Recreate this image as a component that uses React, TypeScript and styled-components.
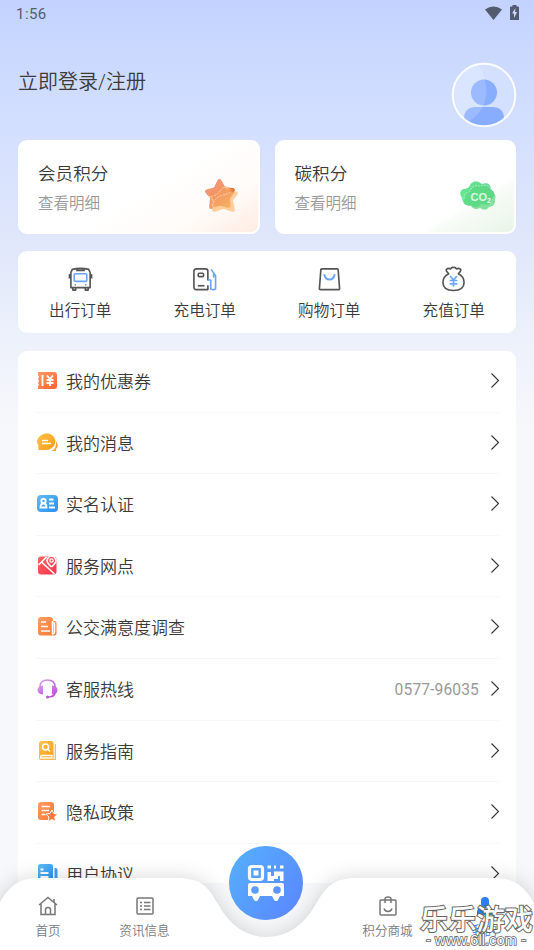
import React from "react";
import styled, { createGlobalStyle } from "styled-components";

const Global = createGlobalStyle`
  *, *::before, *::after { box-sizing: border-box; }
  body { margin: 0; overflow: hidden; font-family: Roboto, "Noto Sans CJK SC", sans-serif; font-weight: 350; color: #3a3a3a; }
  svg { display: block; overflow: visible; }
`;

const Screen = styled.main`
  position: relative;
  width: 534px;
  height: 950px;
  overflow: hidden;
  background: linear-gradient(180deg, #c3d3ff 0, #d1deff 110px, #e0e7fb 240px, #edf1fb 340px, #f7f8fb 430px, #f7f8fa 100%);
`;

const StatusBar = styled.header`
  height: 28px;
  padding: 0 15px 0 16px;
  display: flex;
  align-items: center;
  justify-content: space-between;
  color: #525c70;
  font-size: 15px;
  font-weight: 400;
  letter-spacing: 0.45px;
`;

const StatusIcons = styled.div`
  display: flex;
  align-items: center;
  gap: 8px;
  margin-top: -3px;
`;

const Profile = styled.section`
  height: 112px;
  padding: 33.5px 17px 0 18px;
  display: flex;
  justify-content: space-between;
`;

const Login = styled.h1`
  margin: 3.5px 0 0;
  font-size: 20px;
  line-height: 34px;
  font-weight: 350;
`;

const Points = styled.section`
  display: grid;
  grid-template-columns: 1fr 1fr;
  gap: 15px;
  padding: 0 18px;
`;

const PointCard = styled.article<{ $tint: string }>`
  height: 94px;
  display: flex;
  justify-content: space-between;
  border: 2px solid #fff;
  border-radius: 9px;
  padding: 18px 18px 0;
  background: ${(p) => p.$tint};
`;

const PointTitle = styled.div`
  font-size: 17.6px;
  line-height: 28px;
`;

const PointHint = styled.div`
  margin-top: 3px;
  font-size: 15.5px;
  line-height: 26px;
  color: #999;
`;

const PointIcon = styled.div`
  margin: 17.5px 0 0;
  width: 36px;
`;

const Orders = styled.section`
  height: 82px;
  margin: 17px 18px 0;
  padding-top: 15.5px;
  display: grid;
  grid-template-columns: repeat(4, 1fr);
  background: #fff;
  border-radius: 9px;
`;

const Order = styled.div`
  display: flex;
  flex-direction: column;
  align-items: center;
  font-size: 15.6px;
  line-height: 24px;
  gap: 7.5px;
`;

const Menu = styled.section`
  margin: 18px 18px 0;
  height: 532px;
  padding: 0 17px 0 18px;
  overflow: hidden;
  background: #fff;
  border-radius: 9px 9px 0 0;
`;

const MenuRow = styled.div`
  height: 61.6px;
  padding: 0 0 1.5px 1px;
  display: flex;
  align-items: center;
  border-bottom: 1.5px solid #f6f6f6;
  font-size: 17px;
`;

const MenuLabel = styled.span`
  flex: 1;
  margin-left: 8px;
`;

const Phone = styled.span`
  margin: 3px 12px 0 0;
  color: #999;
  font-size: 15.6px;
  font-weight: 400;
  letter-spacing: 0.12px;
`;

const TabBar = styled.nav`
  position: absolute;
  inset: auto 0 0 0;
  height: 104px;
`;

const BarBack = styled.svg`
  position: absolute;
  inset: 0;
  filter: drop-shadow(0 0 10px rgba(0, 0, 0, 0.16));
`;

const Tabs = styled.div`
  position: relative;
  height: 100%;
  padding-top: 50px;
  display: grid;
  grid-template-columns: 96px 97px 146px 97px 97px;
`;

const Tab = styled.div<{ $active?: boolean }>`
  display: flex;
  flex-direction: column;
  align-items: center;
  gap: 5px;
  font-size: 12.6px;
  line-height: 20px;
  color: ${(p) => (p.$active ? "#2b7df0" : "#777b82")};
`;

const ScanButton = styled.div`
  width: 74px;
  height: 74px;
  margin: -50px auto 0;
  display: grid;
  place-items: center;
  border-radius: 50%;
  background: linear-gradient(125deg, #55aefb 8%, #5a8bff 85%);
`;

const Watermark = styled.svg`
  position: absolute;
  right: 0;
  bottom: 0;
  paint-order: stroke;
`;

function Avatar() {
  return (
    <svg width="66" height="66" viewBox="0 0 66 66">
      <defs>
        <clipPath id="avatar"><circle cx="33" cy="33" r="31" /></clipPath>
      </defs>
      <circle cx="33" cy="33" r="31" fill="#d3e0ff" />
      <g clipPath="url(#avatar)">
        <path d="M13 66V57q0-12 12-12h16q12 0 12 12v9z" fill="#88adff" />
        <circle cx="33" cy="30.500" r="13" fill="#88adff" />
        <path d="M0 0H26Q37 18 35 34T17 60L0 66z" fill="#fff" opacity=".16" />
      </g>
      <circle cx="33" cy="33" r="31.300" fill="none" stroke="#fafcff" strokeWidth="2" />
    </svg>
  );
}

function StarIcon() {
  return (
    <svg width="36" height="36" viewBox="1 1 35 35">
      <defs>
        <linearGradient id="star" x1="0" y1="0" x2="1" y2="1">
          <stop stopColor="#f18d62" /><stop offset="1" stopColor="#f7b064" />
        </linearGradient>
      </defs>
      <g strokeLinejoin="round" strokeWidth="4">
        <path d="M16 4 20 11 29 13 23 19 24 28 16 25 8 29 9 20 4 14 12 12Z" fill="#f39770" stroke="#f39770" />
        <path d="M21 11 24 15 32 16 27 22 29 32 20 29 11 32 12 24 8 18 16 16Z" fill="#ffc78b" stroke="#ffc78b" opacity=".85" />
        <path d="M19 10 22 14 28 15 24 21 25 28 18 26 12 27 12 21 8 17 14 15Z" fill="url(#star)" stroke="url(#star)" />
      </g>
      <path d="M25 11q5-1 6 1l-1 3-4-1z" fill="#e37b3a" />
      <path d="M5 19Q12 20 17 13T28 14M9 28Q11 20 18 18T26 15" fill="none" stroke="#ffe0bd" strokeWidth=".8" strokeDasharray="2 1" />
    </svg>
  );
}

function CloudIcon() {
  return (
    <svg width="36" height="36" viewBox="0 0 36 36">
      <defs>
        <linearGradient id="cloud"><stop stopColor="#65ea90" /><stop offset="1" stopColor="#65d190" /></linearGradient>
      </defs>
      <path d="M2 20Q-2 14 3 11 9 11 10 7q5-7 12-1 8-3 9 5 6 5 1 10-2 8-10 5-6 6-11 1-8 2-9-7" fill="url(#cloud)" />
      <path d="M7 13q4-1 6-5 6-3 9 1 8-2 9 4 6 3 4 8 1 7-6 8-3 5-9 1-6 3-9-2-7 0-7-6 0-5 3-9" fill="#5cd883" opacity=".75" />
      <path d="M4 21q0-6 5-7 4-8 10-6 10-3 12 4" fill="none" stroke="#c2f6d0" strokeWidth=".8" strokeDasharray="2 1" />
      <text x="10.500" y="22.500" fontFamily="Liberation Sans" fontWeight="700" fontSize="11" fill="#d5fbe0">CO</text>
      <text x="27" y="25" fontFamily="Liberation Sans" fontWeight="700" fontSize="7" fill="#f2fff5">2</text>
    </svg>
  );
}

const orderDrawings: Record<string, React.ReactNode> = {
  bus: (
    <>
      <path d="M4.500 2.500Q13 .5 21.500 2.500L23 5.500V21.500H3V5.500zM8.500 3.500h9M3 8H1.500v4M23 8h1.500v4M5 21.500V24h3v-2.500M18 21.500V24h3v-2.500M7 18.500h1M18 18.500h1" />
      <rect x="6.500" y="7" width="13" height="8" rx="1" stroke="#68a6ff" />
    </>
  ),
  charge: (
    <>
      <path d="M16.500 19v4.500H4.500q-2.500 0-2.500-2.500V4.500Q2 2 4.500 2h9.500q2.500 0 2.500 2.500V14" />
      <rect x="6.500" y="6.500" width="5.500" height="3.500" rx="1" /><path d="M6 19.500h7" />
      <path d="M16.500 13.500h3V22q0 1.500 2.500 1.500t2.500-1.500V9L20 2.500M22.500 6v5" stroke="#68a6ff" />
    </>
  ),
  bag: (
    <>
      <path d="M5 2h16q1 0 1 1l1.500 19.500q0 1-1 1h-19q-1 0-1-1L4 3q0-1 1-1z" />
      <path d="M7.500 7.500Q8.500 13 13 13t5.500-5.500" stroke="#68a6ff" strokeWidth="2" />
    </>
  ),
  purse: (
    <>
      <path d="M8 7Q4 3 6 2q2-1 4 0 1-2 3-1.500Q15 0 16 2q2-1 4 0 2 1-2 5 6 3 6 9 0 8-11 8.500Q2 24 2 16q0-6 6-9z" />
      <path d="m9.500 9.500 3.500 4 3.500-4M9 14h8m-8 3.500h8m-4-4v7" stroke="#68a6ff" />
    </>
  ),
};

const menuDrawings: Record<string, React.ReactNode> = {
  coupon: (
    <>
      <path d="M1 2h16q3 0 3 3v11q0 3-3 3H1v-3l1-1-1-2 1-2-1-2 1-2-1-2z" fill="url(#orange)" />
      <path d="M5.500 5v11M10 5.500l3 3.500 3-3.500M9.500 10h7m-7 3h7m-3.500-4v7" stroke="#fff" strokeWidth="1.800" />
    </>
  ),
  message: (
    <>
      <path d="M19 9q3.500 5 0 8v2h-5q6-2 5-10" fill="#ffa13a" />
      <path d="M1.500 18V14Q-2 8 3 4q6-5 12-1 5 4 2.500 10-3 5-9 5z" fill="url(#amber)" />
      <path d="M5 8.500h6m-6 3h9" stroke="#fff" strokeWidth="1.700" />
    </>
  ),
  identity: (
    <>
      <rect x="0" y="2" width="21" height="17" rx="4" fill="url(#blue)" />
      <circle cx="6.500" cy="8" r="2.200" stroke="#fff" strokeWidth="1.800" />
      <path d="M3.500 14.500q0-4 3-4t3 4zM12 6.500h4.500M12 10.500h5M12 14.500h6" stroke="#fff" strokeWidth="1.800" />
    </>
  ),
  map: (
    <>
      <rect x="1" y="1.500" width="18.500" height="18" rx="3" fill="url(#red)" />
      <path d="m1.500 10 8-8M4.500 7l13 12M14.500 12Q10 8 10 5.500 11 1 14.500 1T19 5.500q0 2.500-4.500 6.500" stroke="#fff" strokeWidth="1.600" />
      <circle cx="14.500" cy="5.500" r="1.700" stroke="#fff" strokeWidth="1.300" />
    </>
  ),
  survey: (
    <>
      <path d="M4 1h9q3 0 3 3v1h1.500q2 0 2 2v10.500q0 2-2 2H4q-3 0-3-3V4q0-3 3-3z" fill="url(#orange2)" />
      <path d="M4 6h5M4 10.500h7M4 15h9M15.500 5v13q2 0 2-2V7h-2" stroke="#fff" strokeWidth="1.500" />
    </>
  ),
  headset: (
    <>
      <path d="M3 13V9q0-7 7.500-7T18 9v5q0 5-7 5" stroke="url(#purple)" strokeWidth="1.700" />
      <path d="M6 7.500v9Q.5 16 .5 12T6 7.500M15 7.500v9q5.500-.5 5.500-4.500T15 7.500" fill="url(#purple)" />
      <circle cx="10.500" cy="19" r="1.500" fill="#c355d5" />
    </>
  ),
  guide: (
    <>
      <rect x="2" y="1" width="14.500" height="19" rx="2.500" fill="url(#amber)" />
      <path d="M18.300 4v15.500H5" stroke="#f7bb53" strokeWidth="1.200" />
      <circle cx="8.500" cy="7" r="3" stroke="#fff" strokeWidth="1.600" />
      <path d="m10.500 9 2.500 2.500M3.500 18v-1q0-1.500 2-1.500H15v2.500H3" stroke="#fff" strokeWidth="1.300" />
    </>
  ),
  privacy: (
    <>
      <path d="M4 1h10q3 0 3 3v15H4q-3 0-3-3V4q0-3 3-3" fill="url(#orange2)" />
      <path d="M4.500 5.500H13M4.500 9.500H12m-7.500 4h4" stroke="#fff" strokeWidth="1.600" />
      <path d="m15 9 1.700 3.500 4 .5-3 3 1 4.500-3.700-2-4 2 1-4.500-3-3 4-.5z" fill="#ff7a38" stroke="#fff" strokeWidth="1" />
    </>
  ),
  agreement: (
    <>
      <rect x="1" y="1" width="15" height="19" rx="2.500" fill="url(#blue)" />
      <path d="M17.500 5h1q2 0 2 2v12h-3z" fill="#43a0f1" />
      <path d="M3.500 6.500h3M3.500 10h8m-8 4h8" stroke="#fff" strokeWidth="1.800" />
    </>
  ),
};

const gradients = [
  ["orange", "#ff9a68", "#ff642e"], ["amber", "#ffc34c", "#ff9b18"],
  ["blue", "#62bdf4", "#278ff3"], ["red", "#ff655e", "#f93450"],
  ["orange2", "#ff9d64", "#ff7631"], ["purple", "#d99cf0", "#b94ed6"],
];

const menu = [
  ["coupon", "我的优惠券"], ["message", "我的消息"], ["identity", "实名认证"],
  ["map", "服务网点"], ["survey", "公交满意度调查"], ["headset", "客服热线", "0577-96035"],
  ["guide", "服务指南"], ["privacy", "隐私政策"], ["agreement", "用户协议"],
];

const orders = [["bus", "出行订单"], ["charge", "充电订单"], ["bag", "购物订单"], ["purse", "充值订单"]];

function GradientDefs() {
  return (
    <svg width="0" height="0">
      <defs>
        {gradients.map(([id, from, to]) => (
          <linearGradient key={id} id={id} x1="0" y1="0" x2="1" y2="1"><stop stopColor={from} /><stop offset="1" stopColor={to} /></linearGradient>
        ))}
      </defs>
    </svg>
  );
}

function TabIcon({ children }: { children: React.ReactNode }) {
  return <svg width="20" height="20" viewBox="0 0 20 20" fill="none" stroke="#777" strokeWidth="1.5">{children}</svg>;
}

export default function App() {
  return (
    <Screen>
      <Global />
      <GradientDefs />
      <StatusBar>
        <span>1:56</span>
        <StatusIcons>
          <svg width="17" height="14" viewBox="0 0 17 14"><path d="M0 3.500q8.500-6 17 0L8.500 14z" fill="#525b70" /></svg>
          <svg width="9" height="15" viewBox="0 0 9 15"><path d="M2.500 1.500V0h4v1.500H8q1 0 1 1V15H0V2.500q0-1 1-1z" fill="#525b70" /><path d="M5.500 3 2 8.500h2V13l3-6H5z" fill="#d0dcff" /></svg>
        </StatusIcons>
      </StatusBar>
      <Profile><Login>立即登录/注册</Login><Avatar /></Profile>
      <Points>
        <PointCard $tint="linear-gradient(149deg, #fff 52%, #fffbf8 78%, #ffece2 100%)">
          <div><PointTitle>会员积分</PointTitle><PointHint>查看明细</PointHint></div>
          <PointIcon><StarIcon /></PointIcon>
        </PointCard>
        <PointCard $tint="linear-gradient(149deg, #fff 76%, #f8fcf7 79%, #e8f5e7 100%)">
          <div><PointTitle>碳积分</PointTitle><PointHint>查看明细</PointHint></div>
          <PointIcon><CloudIcon /></PointIcon>
        </PointCard>
      </Points>
      <Orders>
        {orders.map(([icon, label]) => (
          <Order key={icon}>
            <svg width="25" height="25" viewBox="0 0 26 26" fill="none" stroke="#555" strokeWidth="1.7" strokeLinejoin="round">{orderDrawings[icon]}</svg>
            <span>{label}</span>
          </Order>
        ))}
      </Orders>
      <Menu>
        {menu.map(([icon, label, phone]) => (
          <MenuRow key={icon}>
            <svg width="21" height="21" viewBox="0 0 21 21" fill="none">{menuDrawings[icon]}</svg>
            <MenuLabel>{label}</MenuLabel>
            {phone && <Phone>{phone}</Phone>}
            <svg width="8" height="15" viewBox="0 0 8 15" fill="none" stroke="#333" strokeWidth="1.100"><path d="m.5.5 7 7-7 7" /></svg>
          </MenuRow>
        ))}
      </Menu>
      <TabBar>
        <BarBack width="534" height="104" viewBox="0 0 534 104">
          <path d="M-6 104V72Q6 32 36 32H176C202 32 208 41 218 58Q236 91 266.500 91T316 58C326 41 333 32 357 32H497Q527 32 540 72V104z" fill="#fff" />
        </BarBack>
        <Tabs>
          <Tab>
            <TabIcon><path d="m1 9 9-7.500L19 9M3 7.500v11h14v-11M16 6V3M7.500 18v-4q0-2.500 2.500-2.500t2.500 2.500v4" /></TabIcon>
            <span>首页</span>
          </Tab>
          <Tab>
            <TabIcon><rect x="2" y="2" width="16" height="16" rx="1" /><path d="M5 6.500h2m2 0h6.500M5 10h2m2 0h6.500M5 13.500h2m2 0h6.500" /></TabIcon>
            <span>资讯信息</span>
          </Tab>
          <ScanButton>
            <svg width="38" height="38" viewBox="0 0 38 38" fill="none" stroke="#fff">
              <rect x="2.500" y="2.500" width="13" height="13" rx="2.500" strokeWidth="3.200" />
              <rect x="6.500" y="6.500" width="5" height="5" fill="#fff" stroke="none" />
              <path d="M20.500 1.500h3.500v3h-3.500zM27 1.500h2v3h-2zM33 1.500h3.500v3H33zM20.500 8H24v4h3v5h-6.500zM27 7.500h9.500V17H33v-5h-2v3h-4z" fill="#fff" stroke="none" />
              <path d="M3 19h32q2 0 2 2v11h-4l-1.500 3q-.5 2-2 2h-1q-1 0-2-2L25 32H13l-1.500 3q-.5 2-2 2h-1q-1 0-2-2L5 32H1V21q0-2 2-2z" fill="#fff" stroke="none" />
              <circle cx="8" cy="26" r="3.800" fill="#5a9cff" stroke="none" /><circle cx="30" cy="26" r="3.800" fill="#5a94ff" stroke="none" />
            </svg>
          </ScanButton>
          <Tab>
            <TabIcon><rect x="2" y="4" width="16" height="15" rx="1" /><path d="M7 7V3q0-2 3-2t3 2v4M6 12.500q1 3 4 3t4-3" /></TabIcon>
            <span>积分商城</span>
          </Tab>
          <Tab $active>
            <TabIcon><g fill="#2b7df0" stroke="none"><rect x="6" y="1" width="8" height="11" rx="4" /><path d="M2 19v-3q0-4 4-5l4 3 4-3q4 1 4 5v3z" /></g></TabIcon>
            <span>我的</span>
          </Tab>
        </Tabs>
      </TabBar>
      <Watermark width="115" height="50" viewBox="0 0 115 50" fill="#fff" stroke="#666" strokeWidth="2" fontWeight="500">
        <text x="1" y="30" fontFamily="Noto Sans CJK SC" fontSize="28.500" textLength="113" lengthAdjust="spacingAndGlyphs">乐乐游戏</text>
        <text x="7" y="45" fontFamily="Liberation Sans" fontSize="14.500" textLength="100" strokeWidth="1.600">- www.6ll.com -</text>
      </Watermark>
    </Screen>
  );
}
